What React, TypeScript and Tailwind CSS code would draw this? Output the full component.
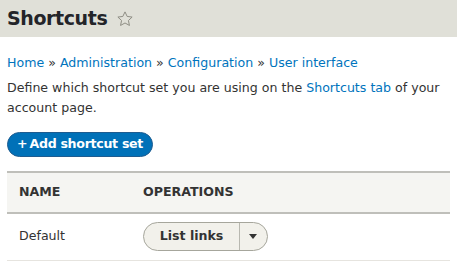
import React from "react";

function Star() {
  return (
    <svg width="18" height="18" viewBox="0 0 24 24" className="ml-[9px] mt-[1px]">
      <path
        d="M12 2.5l2.9 6.1 6.6.8-4.9 4.6 1.3 6.6L12 17.3l-5.9 3.3 1.3-6.6-4.9-4.6 6.6-.8z"
        fill="none"
        stroke="#8c8b82"
        strokeWidth="1.3"
        strokeLinejoin="miter"
      />
    </svg>
  );
}

export default function App() {
  const link = "text-[#0074bd]";
  return (
    <div className="min-h-[269px] w-[457px] bg-white font-['DejaVu_Sans',sans-serif] text-[12.6px] text-[#333]">
      <div className="flex h-[37px] items-center bg-[#e0e0d8] pl-[7px]">
        <h1 className="text-[19px] font-bold leading-none tracking-[-0.4px] text-[#232429]">Shortcuts</h1>
        <Star />
      </div>

      <div className="px-[7px]">
        <div className="mt-[16px] leading-[20px]">
          <a className={link}>Home</a> » <a className={link}>Administration</a> »{" "}
          <a className={link}>Configuration</a> » <a className={link}>User interface</a>
        </div>
        <p className="mt-[5px] leading-[20px]">
          Define which shortcut set you are using on the <a className={link}>Shortcuts tab</a> of your
          account page.
        </p>

        <button className="mt-[14px] flex h-[25px] items-center rounded-full border border-[#1e5c90] bg-[#0071b8] px-[9px] text-[12.6px] font-bold tracking-[-0.3px] text-white">
          +&thinsp;Add shortcut set
        </button>

        <table className="mt-[14px] w-[443px] border-collapse">
          <thead>
            <tr className="border-y-2 border-[#bfbfba] bg-[#f5f5f2]">
              <th className="h-[41px] w-[136px] pl-[12px] text-left font-bold uppercase text-[#333]">Name</th>
              <th className="text-left font-bold uppercase text-[#333]">Operations</th>
            </tr>
          </thead>
          <tbody>
            <tr className="border-b border-[#e6e4df]">
              <td className="h-[47px] pl-[12px]">Default</td>
              <td>
                <div className="flex h-[29px] w-[125px] items-center overflow-hidden rounded-full border border-[#a6a69c] bg-[#f2f1eb]">
                  <span className="flex h-full flex-1 items-center justify-center border-r border-[#b8b8b0] font-bold text-[#333]">
                    List links
                  </span>
                  <span className="flex h-full w-[27px] items-center justify-center pr-[2px]">
                    <svg width="8" height="5" viewBox="0 0 8 5">
                      <path d="M0 0h8L4 5z" fill="#333" />
                    </svg>
                  </span>
                </div>
              </td>
            </tr>
          </tbody>
        </table>
      </div>
    </div>
  );
}
